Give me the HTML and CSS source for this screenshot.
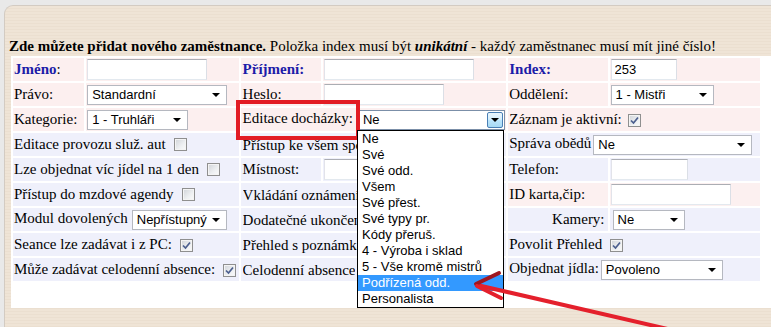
FILE: index.html
```html
<!DOCTYPE html>
<html lang="cs">
<head>
<meta charset="utf-8">
<title>Nový zaměstnanec</title>
<link rel="stylesheet" href="styles.css">
</head>
<body>
<div class="frame">
  <div class="heading"><b>Zde můžete přidat nového zaměstnance.</b> Položka index musí být <b><i>unikátní</i></b> - každý zaměstnanec musí mít jiné číslo!</div>
  <div class="box">
    <table class="form">
      <colgroup>
        <col class="c1"><col class="c2"><col class="c3"><col class="c4"><col class="c5"><col class="c6">
      </colgroup>
      <tr class="pink">
        <td><b class="blue">Jméno</b>:</td>
        <td><input class="txt w119" type="text" value=""></td>
        <td class="l2"><b class="blue">Příjmení:</b></td>
        <td><input class="txt w149" type="text" value=""></td>
        <td><b class="blue">Index:</b></td>
        <td><input class="txt w65" type="text" value="253"></td>
      </tr>
      <tr class="pink">
        <td>Právo:</td>
        <td><span class="sel w140">Standardní</span></td>
        <td class="l2">Heslo:</td>
        <td><input class="txt w119" type="password" value=""></td>
        <td>Oddělení:</td>
        <td><span class="sel w103">1 - Mistři</span></td>
      </tr>
      <tr class="pink">
        <td>Kategorie:</td>
        <td><span class="sel w101">1 - Truhláři</span></td>
        <td class="l2" colspan="2">Editace docházky:<span class="sel active w146">Ne<span class="btn"></span></span></td>
        <td colspan="2">Záznam je aktivní:<span class="cb on gap6"><svg viewBox="0 0 11 11" width="11" height="11"><path d="M2 5.5 L4.5 8 L9 2.5" /></svg></span></td>
      </tr>
      <tr class="lav">
        <td colspan="2">Editace provozu služ. aut<span class="cb gap8"></span></td>
        <td class="l2" colspan="2"><span class="clip">Přístup ke všem spojům</span></td>
        <td colspan="2">Správa obědů<span class="sel w159 gap2">Ne</span></td>
      </tr>
      <tr class="lav">
        <td colspan="2">Lze objednat víc jídel na 1 den<span class="cb gap8"></span></td>
        <td class="l2">Místnost:</td>
        <td><input class="txt w150" type="text" value=""></td>
        <td>Telefon:</td>
        <td><input class="txt w76" type="text" value=""></td>
      </tr>
      <tr class="lav">
        <td colspan="2">Přístup do mzdové agendy<span class="cb gap8"></span></td>
        <td class="l2" colspan="2"><span class="clip">Vkládání oznámení</span></td>
        <td class="pinkcell">ID karta,čip:</td>
        <td class="pinkcell"><input class="txt w119" type="text" value=""></td>
      </tr>
      <tr class="lav">
        <td colspan="2">Modul dovolených<span class="sel w95 gap4">Nepřístupný</span></td>
        <td class="l2" colspan="2"><span class="clip">Dodatečné ukončení</span></td>
        <td class="right">Kamery:</td>
        <td><span class="sel w72 gap2">Ne</span></td>
      </tr>
      <tr class="lav">
        <td colspan="2">Seance lze zadávat i z PC:<span class="cb on gap8"><svg viewBox="0 0 11 11" width="11" height="11"><path d="M2 5.5 L4.5 8 L9 2.5" /></svg></span></td>
        <td class="l2" colspan="2"><span class="clip">Přehled s poznámkami</span></td>
        <td colspan="2">Povolit Přehled<span class="cb on gap8"><svg viewBox="0 0 11 11" width="11" height="11"><path d="M2 5.5 L4.5 8 L9 2.5" /></svg></span></td>
      </tr>
      <tr class="lav">
        <td colspan="2">Může zadávat celodenní absence:<span class="cb on gap8"><svg viewBox="0 0 11 11" width="11" height="11"><path d="M2 5.5 L4.5 8 L9 2.5" /></svg></span></td>
        <td class="l2" colspan="2"><span class="clip">Celodenní absence</span></td>
        <td colspan="2">Objednat jídla:<span class="sel w122 gap2">Povoleno</span></td>
      </tr>
    </table>
    <div class="actions"><span class="button"></span></div>
  </div>
</div>

<div class="redbox"></div>

<ul class="droplist">
  <li>Ne</li>
  <li>Své</li>
  <li>Své odd.</li>
  <li>Všem</li>
  <li>Své přest.</li>
  <li>Své typy pr.</li>
  <li>Kódy přeruš.</li>
  <li>4 - Výroba i sklad</li>
  <li>5 - Vše kromě mistrů</li>
  <li class="hl">Podřízená odd.</li>
  <li>Personalista</li>
</ul>

<svg class="arrow" width="771" height="327" viewBox="0 0 771 327">
  <line x1="477" y1="285" x2="672" y2="330" class="shaft"/>
  <line x1="476" y1="284" x2="499" y2="273" class="wing1"/>
  <line x1="477" y1="286" x2="501" y2="298" class="shaft"/>
</svg>
</body>
</html>
```

FILE: styles.css
```css
html, body {
  margin: 0;
  padding: 0;
}
body {
  width: 771px;
  height: 327px;
  overflow: hidden;
  position: relative;
  background: #e9e9e9;
  font-family: "Liberation Serif", "Times New Roman", serif;
  font-size: 15px;
  color: #000;
}
.frame {
  margin: 5px 0 0 4px;
  height: 322px;
  box-sizing: border-box;
  padding: 31px 0 0 6px;
  border-top: 1px solid #d3cbc2;
  border-left: 1px solid #d3cbc2;
  border-top-left-radius: 9px;
  background: repeating-linear-gradient(180deg, #efe4d6 0px, #efe4d6 2px, #ebdfd0 2px, #ebdfd0 3px);
}
.heading {
  margin-left: -2px;
  height: 19px;
  line-height: 19px;
  white-space: nowrap;
}
.box {
  background: #fff;
  height: 252px;
}
.form {
  border-spacing: 2px;
  table-layout: fixed;
  width: 751px;
}
.c1 { width: 71px; }
.c2 { width: 152px; }
.c3 { width: 80px; }
.c4 { width: 183px; }
.c5 { width: 99px; }
.c6 { width: 150px; }
.form td {
  height: 23px;
  padding: 0 0 0 1px;
  vertical-align: middle;
  white-space: nowrap;
  line-height: 17px;
}
.form td.l2 { padding-left: 2px; }
.form td.right { text-align: right; padding-right: 3px; }
.clip {
  display: inline-block;
  max-width: 115px;
  overflow: hidden;
  vertical-align: middle;
  white-space: nowrap;
}
.pink td { background: #fcefef; }
.lav td { background: #eff0fb; }
.lav td.pinkcell { background: #fcf0f0; }
.blue { color: #1c1ca8; }

.txt {
  box-sizing: border-box;
  height: 21px;
  margin: 0;
  padding: 1px 3px;
  border: 1px solid;
  border-color: #abadb3 #dbdfe6 #e3e9ef #e2e3ea;
  background: #fff;
  font: 13px "Liberation Sans", Arial, sans-serif;
  color: #000;
  vertical-align: middle;
  outline: none;
}
.w65 { width: 66px; }
.w76 { width: 77px; }
.w119 { width: 120px; }
.w149 { width: 150px; }
.w150 { width: 150px; }

.sel {
  display: inline-flex;
  align-items: center;
  justify-content: space-between;
  box-sizing: border-box;
  height: 20px;
  padding: 0 6px 0 4px;
  border: 1px solid #b5b8c0;
  background: #fff;
  font: 13px "Liberation Sans", Arial, sans-serif;
  color: #000;
  vertical-align: middle;
}
.sel::after {
  content: "";
  width: 0;
  height: 0;
  border-top: 4px solid #000;
  border-left: 4px solid transparent;
  border-right: 4px solid transparent;
}
.sel.active {
  padding: 0 1px 0 3px;
  border-color: #7b8fa8;
}
.sel.active::after { display: none; }
.sel .btn {
  box-sizing: border-box;
  width: 16px;
  height: 16px;
  border: 1px solid #4a7fb5;
  border-radius: 2px;
  background: linear-gradient(180deg, #eaf6fd 0%, #d7effc 45%, #bde6fd 50%, #a6d9f4 100%);
  display: flex;
  align-items: center;
  justify-content: center;
}
.sel .btn::after {
  content: "";
  border-top: 4px solid #000;
  border-left: 4px solid transparent;
  border-right: 4px solid transparent;
}
.w72 { width: 72px; }
.w95 { width: 95px; }
.w101 { width: 101px; }
.w103 { width: 103px; }
.w122 { width: 122px; }
.w140 { width: 140px; }
.w146 { width: 146px; }
.w159 { width: 159px; }
.gap2 { margin-left: 2px; }
.gap4 { margin-left: 4px; }
.gap6 { margin-left: 6px; }
.gap8 { margin-left: 8px; }
.l2 .sel.active { margin-left: 6px; }

.cb {
  display: inline-flex;
  align-items: center;
  justify-content: center;
  box-sizing: border-box;
  width: 13px;
  height: 13px;
  border: 1px solid #8f8f8f;
  background: linear-gradient(135deg, #d0d3d8 0%, #eef0f2 60%, #fbfbfb 100%);
  box-shadow: inset 0 0 0 1px #f4f4f4;
  vertical-align: -2px;
}
.cb svg path {
  fill: none;
  stroke: #4c5f8e;
  stroke-width: 1.7;
}

.actions {
  padding: 8px 0 0 348px;
}
.button {
  display: inline-block;
  box-sizing: border-box;
  width: 50px;
  height: 14px;
  border: 1px solid #c9bfae;
  background: #ece3d3;
}

.redbox {
  position: absolute;
  left: 236px;
  top: 100px;
  width: 124px;
  height: 40px;
  box-sizing: border-box;
  border: 4px solid #e21c24;
}

.droplist {
  position: absolute;
  left: 357px;
  top: 130px;
  width: 147px;
  box-sizing: border-box;
  margin: 0;
  padding: 0;
  list-style: none;
  border: 1px solid #000;
  background: #fff;
  font: 13px "Liberation Sans", Arial, sans-serif;
}
.droplist li {
  height: 16px;
  line-height: 16px;
  padding-left: 4px;
  white-space: nowrap;
}
.droplist li.hl {
  background: #3399ff;
  color: #fff;
}

.arrow {
  position: absolute;
  left: 0;
  top: 0;
  pointer-events: none;
}
.arrow line {
  stroke-width: 4;
  stroke-linecap: round;
}
.arrow .shaft { stroke: #e4202c; }
.arrow .wing1 { stroke: #9e1620; }
```
